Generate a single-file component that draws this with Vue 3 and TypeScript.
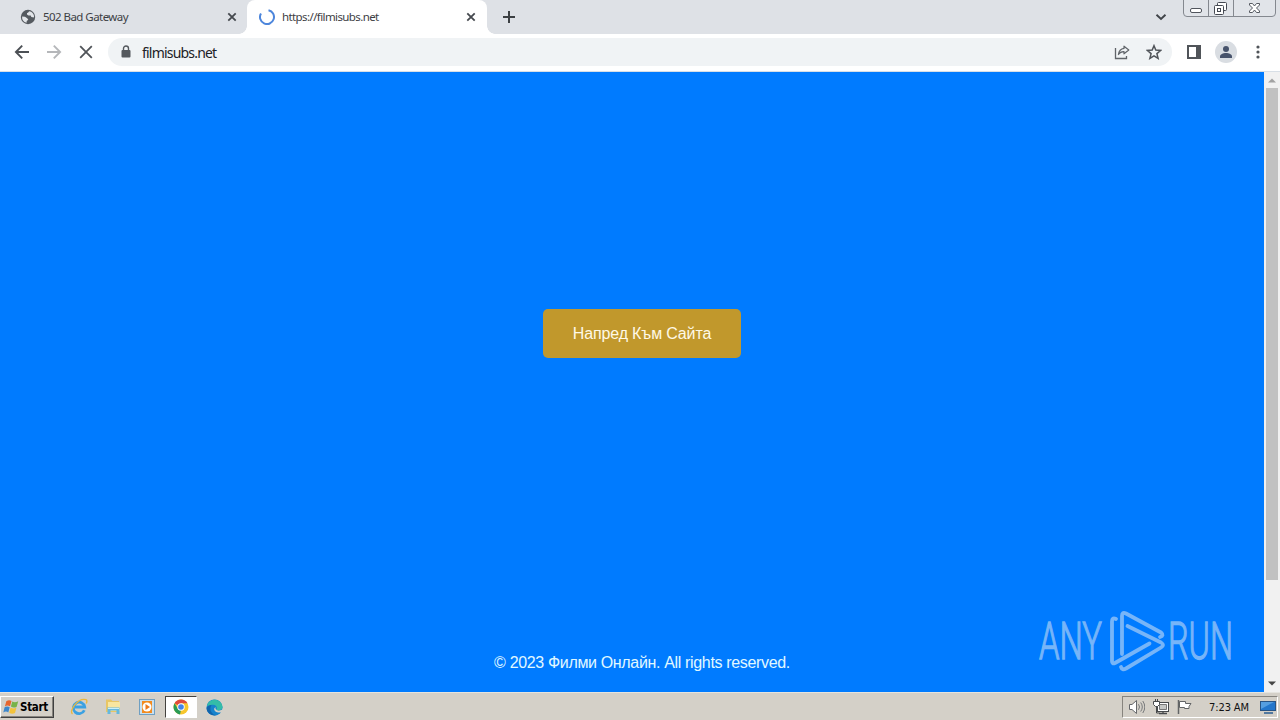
<script setup lang="ts">
interface Tab {
  title: string
  active: boolean
}

const tabs: Tab[] = [
  { title: '502 Bad Gateway', active: false },
  { title: 'https://filmisubs.net', active: true },
]
const address = 'filmisubs.net'
const clock = '7:23 AM'
</script>

<template>
  <div class="desktop">
    <header class="tabstrip">
      <div v-for="tab in tabs" :key="tab.title" class="tab" :class="{ active: tab.active }">
        <svg v-if="tab.active" class="favicon" width="16" height="16" viewBox="0 0 16 16">
          <path d="M9.5 1.2A7 7 0 1 1 2 4.4" fill="none" stroke="#4d86dc" stroke-width="2" />
        </svg>
        <svg v-else class="favicon" width="16" height="16" viewBox="0 0 16 16">
          <circle cx="8" cy="8" r="7.2" fill="#555a60" />
          <path d="M9.2 2.2 8 3.7l-1 .2v1.5l1.5 1.2 2.2-.1.6 1.6 2.5.4.3-1.2A6 6 0 0 0 9.2 2.2ZM2.1 7.4 5 7.8l2.2 1.4 1.1 1.5-1.6 1.2-.1 1.8A6 6 0 0 1 2.1 7.4Z" fill="#e2e5e9" />
        </svg>
        <span class="tab-title">{{ tab.title }}</span>
        <svg class="tab-close" width="10" height="10" viewBox="0 0 10 10">
          <path d="M1.3 1.3 8.7 8.7M8.7 1.3 1.3 8.7" stroke="#45494e" stroke-width="1.8" />
        </svg>
      </div>
      <svg class="new-tab" width="12" height="12" viewBox="0 0 12 12">
        <path d="M6 0v12M0 6h12" stroke="#3c4043" stroke-width="2" />
      </svg>
      <div class="grow"></div>
      <svg class="tab-search" width="12" height="8" viewBox="0 0 12 8">
        <path d="m1.5 1.7 4.5 4.3 4.5-4.3" fill="none" stroke="#404449" stroke-width="1.9" />
      </svg>
      <svg class="window-buttons" width="94" height="18" viewBox="0 0 94 18">
        <path d="M.5 0v13a3.5 3.5 0 0 0 3.5 3.5h85a3.5 3.5 0 0 0 3.5-3.5V0" fill="#e1e4e9" stroke="#84888f" />
        <path d="M25.5 0v16M50.5 0v16" stroke="#84888f" />
        <rect x="7.500" y="8.500" width="11" height="4" rx="1.500" fill="#fff" stroke="#51555d" />
        <g fill="#fff" stroke="#454952">
          <rect x="34.500" y="2.500" width="9" height="8" rx="1" />
          <rect x="31.500" y="5.500" width="9" height="9" rx="1" />
          <rect x="34.500" y="8.500" width="3" height="3" />
        </g>
        <path d="M66.500 3.500h3l2 2.500 2-2.500h3v1.500l-3 3 3 3v1.500h-3l-2-2.500-2 2.500h-3V11l3-3-3-3Z" fill="#fff" stroke="#555961" />
      </svg>
    </header>

    <nav class="toolbar">
      <svg class="nav-icon" width="16" height="16" viewBox="0 0 16 16">
        <path d="M15 8H2M8.200 1.700 1.900 8l6.300 6.300" fill="none" stroke="#4c5055" stroke-width="1.900" />
      </svg>
      <svg class="nav-icon" width="16" height="16" viewBox="0 0 16 16">
        <path d="M1 8h13M7.800 1.700 14.100 8l-6.300 6.300" fill="none" stroke="#b5b7ba" stroke-width="1.900" />
      </svg>
      <svg class="nav-icon" width="16" height="16" viewBox="0 0 16 16">
        <path d="m2.200 2.200 11.600 11.600M13.800 2.200 2.200 13.800" stroke="#505459" stroke-width="1.800" />
      </svg>
      <div class="omnibox">
        <svg width="10" height="14" viewBox="0 0 10 14">
          <path d="M2.500 6V3.500a2.500 2.500 0 0 1 5 0V6" fill="none" stroke="#55595e" stroke-width="1.400" />
          <rect x=".5" y="5" width="9" height="7.500" rx="1" fill="#55595e" />
        </svg>
        <span class="address">{{ address }}</span>
        <div class="grow"></div>
        <svg width="16" height="16" viewBox="0 0 16 16">
          <path d="M1.500 4v10.500h11V12" fill="none" stroke="#606469" stroke-width="1.300" />
          <path d="M10 2.200 14.800 6 10 9.800V7.600C7.400 7.500 5.700 8.500 4.400 10.500 4.900 7 6.800 4.800 10 4.400Z" fill="none" stroke="#606469" stroke-width="1.200" stroke-linejoin="round" />
        </svg>
        <svg class="star" width="16" height="16" viewBox="0 0 16 16">
          <path d="m8 1.700 1.800 4.400 4.800.4-3.700 3.100 1.200 4.700L8 11.800l-4.100 2.500 1.200-4.700-3.700-3.100 4.800-.4Z" fill="none" stroke="#505459" stroke-width="1.500" />
        </svg>
      </div>
      <svg class="panel-icon" width="14" height="14" viewBox="0 0 14 14">
        <rect x="1" y="1" width="12" height="12" fill="none" stroke="#505459" stroke-width="2" />
        <path d="M9 1h4v12H9Z" fill="#505459" />
      </svg>
      <svg class="avatar" width="22" height="22" viewBox="0 0 22 22">
        <circle cx="11" cy="11" r="11" fill="#d9dde2" />
        <circle cx="11" cy="8" r="3" fill="#47536b" />
        <path d="M5 17v-1.500c0-2.300 3-3.500 6-3.500s6 1.200 6 3.500V17Z" fill="#47536b" />
      </svg>
      <svg class="more" width="4" height="14" viewBox="0 0 4 14">
        <circle cx="2" cy="2" r="1.600" fill="#505459" />
        <circle cx="2" cy="7" r="1.600" fill="#505459" />
        <circle cx="2" cy="12" r="1.600" fill="#505459" />
      </svg>
    </nav>

    <div class="viewport">
      <main class="page">
        <button class="enter">Напред Към Сайта</button>
        <footer class="copyright">© 2023 Филми Онлайн. All rights reserved.</footer>
        <svg class="watermark" width="220" height="76" viewBox="0 0 220 76">
          <g class="brand">
            <text x="4" y="54" textLength="63" lengthAdjust="spacingAndGlyphs">ANY</text>
            <text x="133" y="54" textLength="65" lengthAdjust="spacingAndGlyphs">RUN</text>
          </g>
          <g class="emblem">
            <path d="M81 14q-4-2-4 2.500V56q0 3.500 3 2L114.500 38.500" />
            <path d="M87 49V11q0-4.500 4-2.500L126 27.500q3.500 3-1 4.500" />
            <path d="M92.500 21 126 37.500q4 2.500 0 5L91 63.500q-4 2-5-1.500" />
          </g>
        </svg>
      </main>
      <aside class="scrollbar">
        <svg width="8" height="5" viewBox="0 0 8 5"><path d="m0 4.500 4-4 4 4Z" fill="#a2a2a2" /></svg>
        <div class="thumb"></div>
        <svg width="8" height="5" viewBox="0 0 8 5"><path d="m0 .5 4 4 4-4Z" fill="#454545" /></svg>
      </aside>
    </div>

    <footer class="taskbar">
      <button class="start">
        <svg width="17" height="16" viewBox="0 0 17 16">
          <path d="M3.300 2.300C5.300.8 7 .9 8.500 2L7 7.300C5.300 6.300 3.700 6.300 1.900 7.400Z" fill="#e7652d" />
          <path d="M9.300 2.500c1.700 1 3.500 1 5.900-.2l-1.500 5.400c-2 1.200-3.900 1.100-5.800-.1Z" fill="#78b34a" />
          <path d="M1.600 8.200c1.900-1 3.500-.9 5.100.1l-1.400 5.100c-1.600-1.100-3.200-1-5 0Z" fill="#3d87cb" />
          <path d="M7.600 8.600c1.900 1.200 3.700 1.200 5.800.1L12 13.900c-2 1.100-3.800 1-5.800-.2Z" fill="#f3c33c" />
        </svg>
        <span>Start</span>
      </button>

      <div class="launcher first">
        <svg width="18" height="18" viewBox="0 0 18 18">
          <path d="M14.300 12.200A5.700 5.700 0 1 1 14.700 9H5" fill="none" stroke="#3ba1e2" stroke-width="2.800" />
          <path d="M2.500 16C-1.500 13 8-.5 16 1.700c1.300.5 1 2.300.2 3.800" fill="none" stroke="#e9b83f" stroke-width="1.400" />
        </svg>
      </div>
      <div class="launcher">
        <svg width="18" height="18" viewBox="0 0 18 18">
          <path d="M2 3V1.500h5L8.500 3H15v11H2Z" fill="#e8c665" />
          <path d="M4 4h12v9H4Z" fill="#f8e6a0" />
          <path d="M3.500 16V9.500h12V16h-3v-3.500h-6V16Z" fill="#65b8de" />
          <path d="M4 10.500h11" stroke="#c9effb" />
        </svg>
      </div>
      <div class="launcher">
        <svg width="18" height="18" viewBox="0 0 18 18">
          <rect x="1.500" y="1.500" width="15" height="15" fill="#c9e0f0" stroke="#6f9fc2" />
          <path d="M4 3h10v12H4Z" fill="#f28b20" />
          <circle cx="9" cy="9" r="4.500" fill="#fff" />
          <path d="m7.500 6 4.500 3-4.500 3Z" fill="#ed791d" />
        </svg>
      </div>
      <div class="launcher pressed">
        <svg width="16" height="16" viewBox="0 0 16 16">
          <circle cx="8" cy="8" r="7.500" fill="#f7c62c" />
          <path d="M8 8 1.500 4.250A7.500 7.500 0 0 1 14.500 4.250H8Z" fill="#df4b3d" />
          <path d="M1.500 4.250 5 10l3 1-1 4.430A7.500 7.500 0 0 1 1.500 4.250Z" fill="#299b56" />
          <circle cx="8" cy="8" r="3.700" fill="#fff" />
          <circle cx="8" cy="8" r="2.800" fill="#4384e9" />
        </svg>
      </div>
      <div class="launcher edge">
        <svg width="17" height="17" viewBox="0 0 17 17">
          <circle cx="8.500" cy="8.500" r="8" fill="#1683cd" />
          <path d="M1 7C2.500-1.500 15-1.500 16.500 7.500c.5 3.500-4 5-6.500 3.500 2.500-2.700-.5-6-4-5.200C3.500 6.200 2 7 1 7Z" fill="#34bca8" />
          <path d="M5.500 6C2.500 10 6 16.500 11 16.100 6 17.500.5 14 .5 9 1.500 7 3.500 6 5.500 6Z" fill="#1265ac" />
          <path d="M9.500 8c-.8 3 2.500 5 7 2.500l.5 2-2.500 1C11 14 8 12.500 8.200 9.500Z" fill="#d3d0c8" />
        </svg>
      </div>

      <div class="grow"></div>
      <div class="tray">
        <svg width="17" height="16" viewBox="0 0 17 16">
          <path d="M1.500 5.500H4L8.500 1.500v13L4 10.500H1.500Z" fill="#fff" stroke="#66686b" />
          <path d="M10.500 5.200q2 2.800 0 5.600M12.700 3.500q3.200 4.500 0 9M14.800 2q4 6 0 12" fill="none" stroke="#77797b" />
        </svg>
        <svg class="network" width="17" height="16" viewBox="0 0 17 16">
          <rect x="4.500" y="3.500" width="11" height="9" fill="#fff" stroke="#47494b" />
          <path d="M6.500 5.500h7v5h-7Z" fill="#c5c6c4" stroke="#777" />
          <path d="M10 13v2M6 14.500h8" stroke="#47494b" stroke-width="1.300" />
          <path d="M.5 2.500h6v3l-2 2h-2l-2-2Z" fill="#fff" stroke="#47494b" />
          <path d="M2.500 0v2M4.500 0v2M3.500 8v6h3" fill="none" stroke="#47494b" />
        </svg>
        <svg class="flag" width="16" height="16" viewBox="0 0 16 16">
          <path d="M2.500 2.500h6v2h5.500l-2 3 0 2H7.500v-1h-5Z" fill="#fff" stroke="#626466" />
          <path d="M1.500 1v14" stroke="#626466" stroke-width="1.500" />
        </svg>
        <time class="clock">{{ clock }}</time>
        <svg class="show-desktop" width="16" height="14" viewBox="0 0 16 14">
          <rect x=".5" y="1.500" width="15" height="9" fill="#2376cb" stroke="#285485" />
          <path d="M1 2h13L1 9Z" fill="#559ee0" />
          <path d="M4 13h9" stroke="#53799f" stroke-width="2" />
        </svg>
      </div>
    </footer>
  </div>
</template>

<style>
body { margin: 0; overflow: hidden; }
</style>

<style scoped>
.desktop {
  width: 1280px;
  height: 720px;
  display: flex;
  flex-direction: column;
  overflow: hidden;
  font-family: "Liberation Sans", Arial, sans-serif;
}
.desktop svg { display: block; flex: none; }
.grow { flex: 1; }
button { font: inherit; }

.tabstrip {
  height: 34px;
  flex: none;
  display: flex;
  align-items: center;
  background: #dee1e6;
}
.tab {
  box-sizing: border-box;
  display: flex;
  align-items: center;
  width: 247px;
  height: 34px;
  padding: 0 10px 0 20px;
}
.tab.active {
  width: 240px;
  padding: 0 11px 0 12px;
  border-radius: 8px 8px 0 0;
  background: #fff;
  position: relative;
}
.tab.active::before,
.tab.active::after {
  content: "";
  position: absolute;
  bottom: 0;
  width: 8px;
  height: 8px;
}
.tab.active::before { left: -8px; background: radial-gradient(circle at 0 0, transparent 7.5px, #fff 8px); }
.tab.active::after { right: -8px; background: radial-gradient(circle at 100% 0, transparent 7.5px, #fff 8px); }
.tab-title {
  flex: 1;
  margin-left: 7px;
  padding-bottom: 2px;
  white-space: nowrap;
  color: #3d4044;
  font: 11.5px "Noto Sans", sans-serif;
  letter-spacing: -.55px;
}
.tab.active .tab-title { letter-spacing: -.6px; }
.new-tab { margin-left: 16px; }
.tab-search { margin-right: 14px; }
.window-buttons { align-self: flex-start; margin-right: 3px; }
.tab-search { margin-right: 16px; }

.toolbar {
  box-sizing: border-box;
  height: 38px;
  flex: none;
  display: flex;
  align-items: center;
  padding: 0 20px 1px 14px;
  border-bottom: 1px solid #d8dfe6;
  background: #fff;
}
.nav-icon { margin-right: 16px; }
.nav-icon + .nav-icon + .nav-icon { margin-right: 14px; }
.omnibox {
  box-sizing: border-box;
  width: 1064px;
  height: 28px;
  display: flex;
  align-items: center;
  padding: 0 10px 0 13px;
  border-radius: 14px;
  background: #f0f3f5;
}
.address {
  margin-left: 11px;
  color: #202124;
  font: 14px "Noto Sans", sans-serif;
  letter-spacing: -.8px;
}
.star { margin-left: 16px; }
.panel-icon { margin-left: 15px; }
.avatar { margin-left: 14px; }
.more { margin-left: 19px; }

.viewport { flex: 1; min-height: 0; display: flex; }
.page {
  width: 1264px;
  position: relative;
  display: flex;
  flex-direction: column;
  align-items: center;
  background: #007bff;
  color: #fff;
}
.enter {
  margin: 237px 0 0 20px;
  width: 198px;
  height: 49px;
  padding: 0;
  border: 0;
  border-radius: 5px;
  background: #c1982c;
  color: #fff9e6;
  font-size: 16px;
  letter-spacing: -.15px;
}
.copyright {
  margin: auto 0 19px 20px;
  font-size: 16px;
  line-height: 20px;
  letter-spacing: -.34px;
  color: #e0f8ff;
}
.watermark { position: absolute; left: 1035px; top: 533px; }
.brand {
  fill: #77b5f8;
  stroke: #77b5f8;
  stroke-width: 1.3px;
  font: 300 51px Roboto, sans-serif;
}
.emblem {
  fill: none;
  stroke: #77b5f8;
  stroke-width: 3.8px;
  stroke-linecap: round;
  stroke-linejoin: round;
}
.scrollbar {
  box-sizing: border-box;
  width: 16px;
  padding: 6px 0;
  display: flex;
  flex-direction: column;
  align-items: center;
  background: #f1f1f1;
}
.thumb { width: 12px; height: 492px; margin: 5px 0 auto; background: #c1c1c1; }

.taskbar {
  box-sizing: border-box;
  height: 28px;
  flex: none;
  display: flex;
  align-items: center;
  padding: 1px 2px 0 0;
  border-top: 1px solid #e5e4df;
  background: #d4d0c8;
}
.start {
  box-sizing: border-box;
  width: 54px;
  height: 22px;
  display: flex;
  align-items: center;
  padding: 0 2px;
  border: 1px solid;
  border-color: #fff #404040 #404040 #fff;
  box-shadow: inset -1px -1px #86837d;
  background: #d4d0c8;
  color: #000;
  font: bold 11.5px "DejaVu Sans Condensed", sans-serif;
  letter-spacing: -.3px;
}
.launcher {
  box-sizing: border-box;
  width: 34px;
  height: 22px;
  display: flex;
  align-items: center;
  justify-content: center;
}
.launcher.first { margin-left: 8px; }
.launcher.pressed {
  width: 32px;
  margin: 0 1px;
  border: 1px solid;
  border-color: #44423e #fff #fff #44423e;
  background: #fff;
}
.launcher.edge { width: 33px; }
.tray {
  box-sizing: border-box;
  width: 156px;
  height: 22px;
  display: flex;
  align-items: center;
  padding-left: 5px;
  border: 1px solid;
  border-color: #87847e #fff #fff #87847e;
}
.network { margin-left: 8px; }
.flag { margin-left: 7px; }
.clock {
  width: 42px;
  margin-left: 16px;
  color: #111;
  font: 11px "DejaVu Sans Condensed", sans-serif;
  letter-spacing: -.1px;
  white-space: nowrap;
}
.show-desktop { margin-left: 9px; }
</style>
